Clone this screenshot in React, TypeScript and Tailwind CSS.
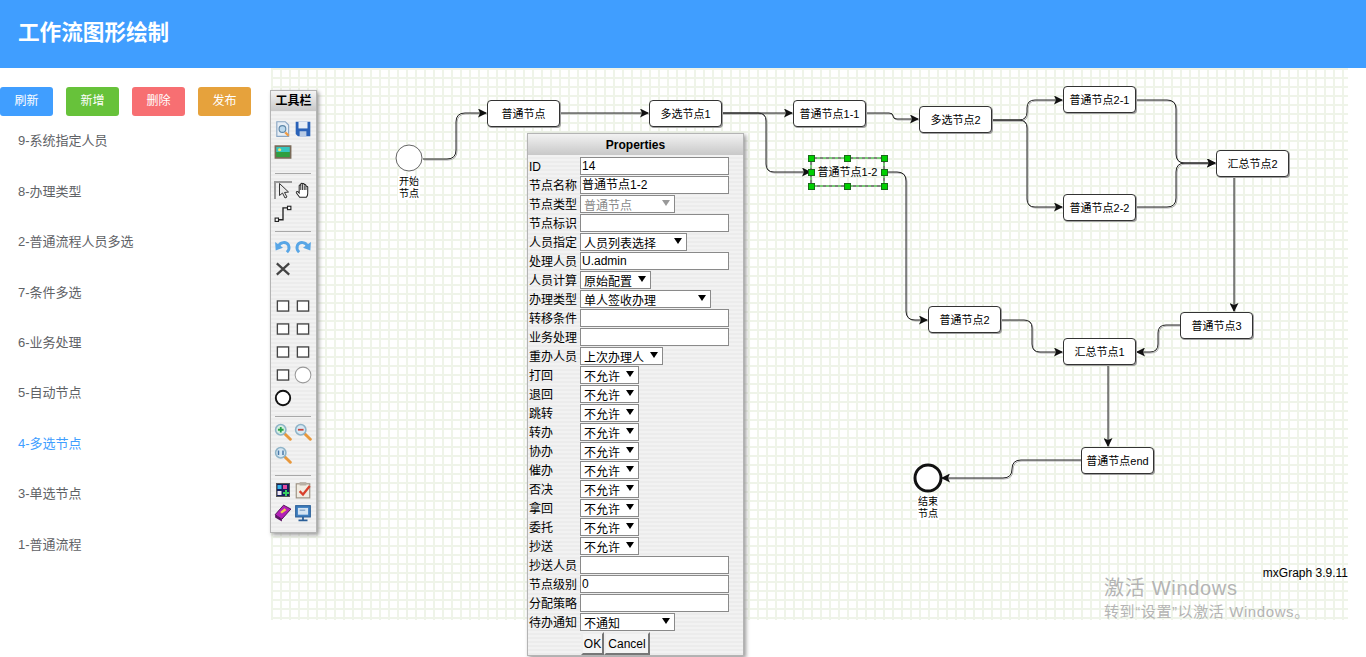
import React from "react";

// page coordinates of the graph canvas
const OX = 271;
const OY = 68;

const buttons = [
  { label: "刷新", cls: "bg-[#409eff]" },
  { label: "新增", cls: "bg-[#67c23a]" },
  { label: "删除", cls: "bg-[#f76f72]" },
  { label: "发布", cls: "bg-[#e6a23c]" },
];

const flows = [
  "9-系统指定人员",
  "8-办理类型",
  "2-普通流程人员多选",
  "7-条件多选",
  "6-业务处理",
  "5-自动节点",
  "4-多选节点",
  "3-单选节点",
  "1-普通流程",
];

const nodes = [
  { x: 487, y: 100, text: "普通节点" },
  { x: 649, y: 100, text: "多选节点1" },
  { x: 793, y: 100, text: "普通节点1-1" },
  { x: 919, y: 106, text: "多选节点2" },
  { x: 1063, y: 86, text: "普通节点2-1" },
  { x: 1063, y: 194, text: "普通节点2-2" },
  { x: 1216, y: 150, text: "汇总节点2" },
  { x: 928, y: 306, text: "普通节点2" },
  { x: 1063, y: 338, text: "汇总节点1" },
  { x: 1180, y: 312, text: "普通节点3" },
  { x: 1081, y: 447, text: "普通节点end" },
];

const edges = [
  "M423 159H447Q456 159 456 150V122Q456 113 465 113H486",
  "M560 113H648",
  "M722 113H792",
  "M722 113H758Q766 113 766 121V164Q766 172 774 172H810",
  "M866 113H889Q893 113 893 116Q893 119 897 119H918",
  "M884 172H897Q906 172 906 181V311Q906 320 915 320H927",
  "M992 120H1019Q1027 120 1027 112V108Q1027 100 1035 100H1062",
  "M992 120H1019Q1027 120 1027 128V199Q1027 207 1035 207H1062",
  "M1136 100H1167Q1176 100 1176 109V154Q1176 163 1185 163H1215",
  "M1136 207H1167Q1176 207 1176 198V172Q1176 163 1185 163H1215",
  "M1234 177V311",
  "M1001 320H1024Q1032 320 1032 328V344Q1032 352 1040 352H1062",
  "M1180 325H1166Q1158 325 1158 333V344Q1158 352 1150 352H1137",
  "M1108 365V446",
  "M1081 460H1021Q1012 460 1012 469Q1012 478 1003 478H942",
];

const handles = [
  [811, 158],
  [847, 158],
  [884, 158],
  [811, 172],
  [884, 172],
  [811, 186],
  [847, 186],
  [884, 186],
];

type Field =
  | { label: string; kind: "input"; value: string }
  | { label: string; kind: "select"; value: string; width: string; disabled?: boolean };

const notAllowed = ["打回", "退回", "跳转", "转办", "协办", "催办", "否决", "拿回", "委托", "抄送"];

const fields: Field[] = [
  { label: "ID", kind: "input", value: "14" },
  { label: "节点名称", kind: "input", value: "普通节点1-2" },
  { label: "节点类型", kind: "select", value: "普通节点", width: "w-[95px]", disabled: true },
  { label: "节点标识", kind: "input", value: "" },
  { label: "人员指定", kind: "select", value: "人员列表选择", width: "w-[107px]" },
  { label: "处理人员", kind: "input", value: "U.admin" },
  { label: "人员计算", kind: "select", value: "原始配置", width: "w-[71px]" },
  { label: "办理类型", kind: "select", value: "单人签收办理", width: "w-[131px]" },
  { label: "转移条件", kind: "input", value: "" },
  { label: "业务处理", kind: "input", value: "" },
  { label: "重办人员", kind: "select", value: "上次办理人", width: "w-[83px]" },
  ...notAllowed.map((label): Field => ({ label, kind: "select", value: "不允许", width: "w-[59px]" })),
  { label: "抄送人员", kind: "input", value: "" },
  { label: "节点级别", kind: "input", value: "0" },
  { label: "分配策略", kind: "input", value: "" },
  { label: "待办通知", kind: "select", value: "不通知", width: "w-[95px]" },
];

const Icon: React.FC<{ children: React.ReactNode; size?: number }> = ({ children, size = 18 }) => (
  <svg width={size} height={size} viewBox="0 0 16 16">
    {children}
  </svg>
);

const Magnifier: React.FC<{ children?: React.ReactNode; fill: string }> = ({ children, fill }) => (
  <Icon>
    <path d="M9.5 9.5L14.5 14.5" stroke="#e8983c" strokeWidth="2.6" strokeLinecap="round" />
    <circle cx="6" cy="6" r="4.6" fill={fill} stroke="#8fb4c8" strokeWidth="1.4" />
    {children}
  </Icon>
);

const tools: Record<string, React.ReactNode> = {
  preview: (
    <Icon>
      <path d="M2.5 1.5H10L13 4.5V14.5H2.5Z" fill="#e6eef6" stroke="#8aa6c4" />
      <circle cx="7.5" cy="8" r="3" fill="#bcd9ee" stroke="#5f87a8" />
      <path d="M10 11L13 14" stroke="#ef9b45" strokeWidth="2" />
    </Icon>
  ),
  save: (
    <Icon>
      <path d="M1.5 1.5H14.5V14.5H3.5L1.5 12.5Z" fill="#2a62b8" />
      <rect x="4" y="1.5" width="8" height="6" fill="#e8eef6" />
      <rect x="5" y="10" width="6" height="4.5" fill="#b9cbe4" />
    </Icon>
  ),
  image: (
    <Icon>
      <rect x="0.5" y="2" width="15" height="12" fill="#7a6a58" />
      <rect x="2" y="3.5" width="12" height="4.5" fill="#35c6c0" />
      <rect x="2" y="8" width="12" height="4.5" fill="#2f9e3f" />
      <circle cx="5" cy="6" r="1.4" fill="#f4e26a" />
    </Icon>
  ),
  hand: (
    <Icon>
      <path
        d="M5 14.5L2.2 10.6C1.6 9.6 2.8 8.8 3.6 9.6L4.6 10.6V4.2C4.6 3.2 6 3.2 6 4.2V2.8C6 1.8 7.5 1.8 7.5 2.8V3C7.5 2 9.1 2 9.1 3V3.8C9.1 3 10.6 3 10.6 4V5.2C10.6 4.4 12.2 4.4 12.2 5.4V11C12.2 12.6 11.6 13.6 11 14.5Z"
        fill="#fff"
        stroke="#222"
        strokeWidth="0.9"
      />
      <path d="M6 4V8M7.5 3V8M9.1 4V8M10.6 5V8" stroke="#222" strokeWidth="0.8" />
    </Icon>
  ),
  connector: (
    <Icon>
      <path d="M3 14H8V3.5H13" fill="none" stroke="#222" strokeWidth="1.2" />
      <rect x="1" y="12.5" width="3" height="3" fill="#fff" stroke="#222" />
      <rect x="12" y="2" width="3" height="3" fill="#fff" stroke="#222" />
    </Icon>
  ),
  undo: (
    <Icon>
      <path d="M4 8.5C5 4.5 11 3.5 13 7.5C14 10 13 12 11.5 13.5" fill="none" stroke="#58a6e6" strokeWidth="2.6" />
      <path d="M1 4.5L1.5 12L8 9.5Z" fill="#58a6e6" />
    </Icon>
  ),
  redo: (
    <Icon>
      <path d="M12 8.5C11 4.5 5 3.5 3 7.5C2 10 3 12 4.5 13.5" fill="none" stroke="#58a6e6" strokeWidth="2.6" />
      <path d="M15 4.5L14.5 12L8 9.5Z" fill="#58a6e6" />
    </Icon>
  ),
  del: (
    <Icon>
      <path d="M2.5 3L13.5 13M13.5 3L2.5 13" stroke="#444" strokeWidth="2" />
    </Icon>
  ),
  rect: (
    <Icon>
      <rect x="3" y="3.5" width="10" height="9" fill="#fff" stroke="#444" strokeWidth="1.2" />
    </Icon>
  ),
  circle: (
    <Icon>
      <circle cx="8" cy="8" r="7" fill="#fff" stroke="#999" strokeWidth="0.9" />
    </Icon>
  ),
  thick: (
    <Icon>
      <circle cx="8" cy="8" r="6.4" fill="#fff" stroke="#111" strokeWidth="1.7" />
    </Icon>
  ),
  zoomIn: (
    <Magnifier fill="#d7f0e2">
      <path d="M3.5 6H8.5M6 3.5V8.5" stroke="#27a24a" strokeWidth="1.6" />
    </Magnifier>
  ),
  zoomOut: (
    <Magnifier fill="#d6e8f4">
      <path d="M3.5 6H8.5" stroke="#c8443c" strokeWidth="1.6" />
    </Magnifier>
  ),
  zoomFit: (
    <Magnifier fill="#d6e8f4">
      <path d="M4 4V8M8 4V8" stroke="#4a78a8" strokeWidth="1.3" />
    </Magnifier>
  ),
  grid: (
    <Icon size={16}>
      <rect x="1.5" y="1.5" width="13" height="13" fill="#14205e" stroke="#555" />
      <rect x="2.5" y="3" width="4" height="4" fill="#36b4e8" />
      <rect x="8" y="3" width="4" height="4" fill="#e24ba0" />
      <rect x="2.5" y="9" width="4" height="4" fill="#f0e6f0" />
      <path d="M8 11H14M11 8V14" stroke="#38d060" strokeWidth="2" />
    </Icon>
  ),
  clipboard: (
    <Icon>
      <rect x="2" y="2.5" width="12" height="12.5" fill="#f0ece2" stroke="#9a8f80" />
      <rect x="5" y="1" width="6" height="3" fill="#b8b0a4" />
      <path d="M5 9L8 12L14 4.5" fill="none" stroke="#d8402c" strokeWidth="2" />
    </Icon>
  ),
  book: (
    <Icon>
      <path d="M1 9.5L8.5 1L15 4.5L7 13.5Z" fill="#b41fb8" stroke="#4a0c50" strokeWidth="0.8" />
      <path d="M1 9.5L7 13.5V15.5L1 12Z" fill="#5c1064" />
      <path d="M5.5 7L9.5 3.8L11 5.5L7 8.5Z" fill="#f0cd4a" />
    </Icon>
  ),
  monitor: (
    <Icon>
      <rect x="1.5" y="1.5" width="13" height="10" fill="#3f7fc0" stroke="#2b5f98" />
      <rect x="3.5" y="3.5" width="9" height="6" fill="#d4e4f2" />
      <path d="M5 5.5H10" stroke="#7a9cc0" />
      <path d="M4 14.5H12M8 11.5V14.5" stroke="#2b5f98" strokeWidth="1.6" />
    </Icon>
  ),
};

const ToolRow: React.FC<{ left: string; right?: string }> = ({ left, right }) => (
  <div className="flex h-[23px]">
    <div className="flex h-[23px] w-[20px] items-center justify-center">{tools[left]}</div>
    {right && <div className="flex h-[23px] w-[20px] items-center justify-center">{tools[right]}</div>}
  </div>
);

const Toolbar = () => (
  <div className="absolute left-[-1px] top-[22px] z-10 w-[47px] border border-[#b4b4b4] shadow-[2px_2px_4px_#999]">
    <div className="flex h-[20px] items-center justify-center bg-gradient-to-b from-[#f4f4f4] to-[#c8c8c8] text-[12px] font-bold text-black">
      工具栏
    </div>
    <div className="bg-[repeating-linear-gradient(0deg,#ececec_0px,#ececec_2px,#f2f2f2_2px,#f2f2f2_4px)] pb-[8px] pl-[2px] pt-[6px]">
      <ToolRow left="preview" right="save" />
      <ToolRow left="image" />
      <div className="mb-[4px] ml-[2px] mt-[10px] h-px w-[36px] bg-[#a8a8a8]" />
      <div className="flex h-[23px]">
        <div className="flex h-[23px] w-[20px] items-center justify-center">
          <div className="flex h-[18px] w-[18px] items-center justify-center border-l-2 border-t-2 border-[#999]">
            <svg width="14" height="16" viewBox="0 0 14 16">
              <path d="M2.5 0.5V12.5L5.5 10L8 15L10 14L7.5 9.5L11.5 9Z" fill="#e8e8e8" stroke="#333" />
            </svg>
          </div>
        </div>
        <div className="flex h-[23px] w-[20px] items-center justify-center">{tools.hand}</div>
      </div>
      <ToolRow left="connector" />
      <div className="mb-[2px] ml-[2px] mt-[7px] h-px w-[36px] bg-[#a8a8a8]" />
      <ToolRow left="undo" right="redo" />
      <ToolRow left="del" />
      <div className="h-[14px]" />
      <ToolRow left="rect" right="rect" />
      <ToolRow left="rect" right="rect" />
      <ToolRow left="rect" right="rect" />
      <ToolRow left="rect" right="circle" />
      <ToolRow left="thick" />
      <div className="mb-[3px] ml-[2px] mt-[7px] h-px w-[36px] bg-[#a8a8a8]" />
      <ToolRow left="zoomIn" right="zoomOut" />
      <ToolRow left="zoomFit" />
      <div className="mb-[2px] ml-[2px] mt-[9px] h-px w-[36px] bg-[#a8a8a8]" />
      <ToolRow left="grid" right="clipboard" />
      <ToolRow left="book" right="monitor" />
    </div>
  </div>
);

const PropertyRow: React.FC<{ field: Field }> = ({ field }) => (
  <div className="mb-px flex h-[18px] items-start">
    <label className="w-[51px] shrink-0 translate-y-px whitespace-nowrap text-[12px] leading-[18px] text-black">
      {field.label}
    </label>
    {field.kind === "input" ? (
      <input
        readOnly
        value={field.value}
        className="block h-[18px] w-[149px] border border-[#8a8a8a] bg-white px-[1px] text-[12px] text-black outline-none"
      />
    ) : (
      <div className={`relative h-[18px] ${field.width}`}>
        <select
          disabled={field.disabled}
          defaultValue={field.value}
          className={`block h-[18px] w-full appearance-none rounded-none border border-[#8a8a8a] bg-white pl-[3px] pt-[3px] text-[12px] leading-[14px] outline-none ${
            field.disabled ? "text-[#8a8a8a] opacity-100" : "text-black"
          }`}
        >
          <option>{field.value}</option>
        </select>
        <span
          className={`absolute right-[5px] top-[5px] h-0 w-0 border-x-[4px] border-t-[6px] border-x-transparent ${
            field.disabled ? "border-t-[#999]" : "border-t-black"
          }`}
        />
      </div>
    )}
  </div>
);

const PropertiesWindow = () => (
  <div className="absolute left-[256px] top-[65px] z-10 w-[217px] border border-[#b4b4b4] bg-[repeating-linear-gradient(0deg,#ececec_0px,#ececec_2px,#f2f2f2_2px,#f2f2f2_4px)] shadow-[2px_2px_4px_#999]">
    <div className="flex h-[21px] items-center justify-center bg-gradient-to-b from-[#f2f2f2] to-[#c8c8c8] text-[12px] font-bold text-black">
      Properties
    </div>
    <div className="pl-[1px] pt-[2px]">
      {fields.map((field) => (
        <PropertyRow key={field.label} field={field} />
      ))}
      <div className="flex h-[23px] pl-[52px]">
        <button className="h-[23px] w-[23px] border-2 border-b-[#777] border-l-[#eee] border-r-[#777] border-t-[#eee] bg-[#f4f4f4] text-[12px] text-black">
          OK
        </button>
        <button className="h-[23px] w-[46px] border-2 border-b-[#777] border-l-[#eee] border-r-[#777] border-t-[#eee] bg-[#f4f4f4] text-[12px] text-black">
          Cancel
        </button>
      </div>
    </div>
  </div>
);

const Graph = () => (
  <div className="relative h-[552px] w-[1077px] bg-[linear-gradient(#eff4e9_2px,transparent_2px),linear-gradient(90deg,#eff4e9_2px,transparent_2px)] bg-[size:9px_9px]">
    <svg className="absolute inset-0" width="1077" height="552" viewBox={`${OX} ${OY} 1077 552`}>
      <defs>
        <marker id="arrow" viewBox="0 0 9 9" refX="8" refY="4.5" markerWidth="9" markerHeight="9" orient="auto" markerUnits="userSpaceOnUse">
          <path d="M0 0L9 4.5L0 9L2 4.5Z" fill="#111" />
        </marker>
      </defs>
      {edges.map((d) => (
        <path key={`s${d}`} d={d} transform="translate(1 1)" fill="none" stroke="#b0b0b0" strokeWidth="1" />
      ))}
      {edges.map((d) => (
        <path key={d} d={d} fill="none" stroke="#222" strokeWidth="1" markerEnd="url(#arrow)" />
      ))}
      <circle cx="409" cy="158" r="13" fill="#fff" stroke="#666" />
      <circle cx="928" cy="478" r="13" fill="#fff" stroke="#111" strokeWidth="3" />
      <rect x="811" y="158" width="73" height="28" fill="none" stroke="#00a000" strokeDasharray="3 3" />
      <rect x="811" y="158" width="73" height="28" fill="none" stroke="#111" strokeDasharray="3 3" strokeDashoffset="3" />
      {handles.map(([x, y]) => (
        <rect key={`${x}-${y}`} x={x - 2.5} y={y - 2.5} width="6" height="6" fill="#00d000" stroke="#1a6a1a" />
      ))}
    </svg>

    {nodes.map((node) => (
      <div
        key={node.text}
        className="absolute flex h-[27px] w-[73px] items-center justify-center rounded-[4px] border border-[#333] bg-white pt-px text-[11px] text-black shadow-[1px_1px_0_#a0a0a0]"
        style={{ left: node.x - OX, top: node.y - OY }}
      >
        {node.text}
      </div>
    ))}
    <div className="absolute left-[540px] top-[96px] flex h-[17px] w-[73px] items-center justify-center text-[11px] text-black">
      普通节点1-2
    </div>

    <div className="absolute left-[127px] top-[108px] w-[22px] bg-white text-center text-[10px] leading-[12px] text-black">
      开始
      <br />
      节点
    </div>
    <div className="absolute left-[646px] top-[428px] w-[22px] bg-white text-center text-[10px] leading-[12px] text-black">
      结束
      <br />
      节点
    </div>

    <Toolbar />
    <PropertiesWindow />

    <div className="absolute right-0 top-[498px] text-[12px] leading-[14px] text-black">mxGraph 3.9.11</div>
    <div className="absolute left-[833px] top-[508px] text-[20px] leading-[24px] tracking-[0.7px] text-[#b4b4b4]">
      激活 Windows
    </div>
    <div className="absolute left-[833px] top-[535px] whitespace-nowrap text-[15px] leading-[18px] tracking-[0.6px] text-[#b4b4b4]">
      转到“设置”以激活 Windows。
    </div>
  </div>
);

export default function App() {
  return (
    <div className="h-[657px] w-[1366px] overflow-hidden bg-white font-['Liberation_Sans','Noto_Sans_CJK_SC',sans-serif]">
      <div className="flex h-[68px] items-center bg-[#409eff] pb-[1px] pl-[18px] text-[21.6px] font-bold text-white">
        工作流图形绘制
      </div>
      <div className="flex">
        <div className="w-[271px] shrink-0 pt-[19px]">
          <div className="flex gap-[13px]">
            {buttons.map((b) => (
              <button key={b.label} className={`h-[29px] w-[53px] rounded-[3px] pb-[2px] text-[12px] text-white ${b.cls}`}>
                {b.label}
              </button>
            ))}
          </div>
          <ul>
            {flows.map((name) => (
              <li
                key={name}
                className={`flex h-[50.4px] items-center pl-[18px] text-[13px] ${
                  name === "4-多选节点" ? "text-[#409eff]" : "text-[#606266]"
                }`}
              >
                {name}
              </li>
            ))}
          </ul>
        </div>
        <Graph />
      </div>
    </div>
  );
}
